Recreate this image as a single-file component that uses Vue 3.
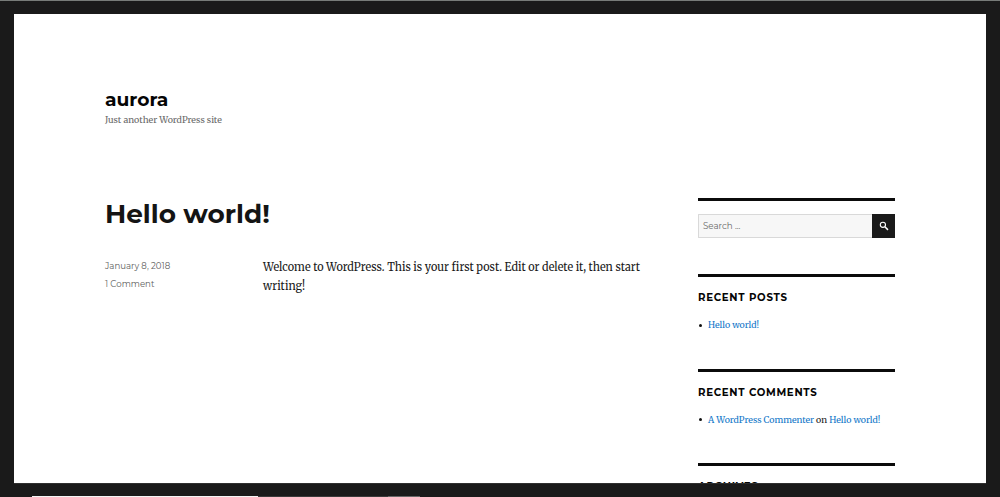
<script setup>
const recent = [
  { title: 'Recent Posts', key: 'posts' },
  { title: 'Recent Comments', key: 'comments' },
]
</script>

<template>
  <div class="window">
    <div class="page">
      <header class="masthead">
        <h1 class="site-title">aurora</h1>
        <p class="tagline narrow">Just another WordPress site</p>
      </header>
      <div class="content">
        <main class="post">
          <h2 class="post-title">Hello world!</h2>
          <div class="post-row">
            <footer class="meta">
              <div>January 8, 2018</div>
              <div>1 Comment</div>
            </footer>
            <div class="body">
              <div>Welcome to WordPress. This is your first post. Edit or delete it, then start</div>
              <div>writing!</div>
            </div>
          </div>
        </main>
        <aside class="sidebar">
          <section class="widget search-widget">
            <form class="search" @submit.prevent>
              <div class="field">Search ...</div>
              <button class="submit" aria-label="Search">
                <svg width="10" height="10" viewBox="0 0 10 10" fill="none" stroke="#fff">
                  <circle cx="3.9" cy="3.8" r="2.6" stroke-width="1.1" />
                  <path d="M5.9 5.8 9 8.9" stroke-width="1.5" />
                </svg>
              </button>
            </form>
          </section>
          <section v-for="w in recent" :key="w.key" class="widget" :class="w.key">
            <h3>{{ w.title }}</h3>
            <ul>
              <li v-if="w.key === 'posts'"><span class="narrow"><a>Hello world!</a></span></li>
              <li v-else><span class="narrow"><a>A WordPress Commenter</a> on <a>Hello world!</a></span></li>
            </ul>
          </section>
          <section class="widget archives">
            <h3>Archives</h3>
          </section>
        </aside>
      </div>
    </div>
    <div class="edge"><i class="light"></i><i class="gap"></i><i class="dim"></i></div>
  </div>
</template>

<style>
body { margin: 0; background: #1a1a1a; }
</style>

<style scoped>
* { box-sizing: border-box; }
.window {
  width: 1000px; height: 497px; overflow: hidden;
  display: flex; flex-direction: column;
  background: #1a1a1a; border-top: 1px solid #777b78;
}
.page {
  margin: 13px 14px 0 14px; height: 470px; flex: none; overflow: hidden;
  background: #fff; padding: 76px 91px 0;
  border-bottom: 1px solid #303030;
  font-family: Merriweather, "Noto Serif", "DejaVu Serif", serif; color: #1a1a1a;
}
h1, h2, h3, p, ul { margin: 0; padding: 0; }
.narrow { transform: scaleX(.96); transform-origin: 0 50%; }
.masthead { height: 108px; white-space: nowrap; }
.site-title { font: 700 18.7px/20px Montserrat, Inter, sans-serif; color: #050505; }
.tagline { font-size: 9.25px; line-height: 16px; color: #686868; margin-top: 2px; }
.content { display: flex; justify-content: space-between; }
.post { width: 550px; white-space: nowrap; }
.post-title { font: 700 26.3px/32px Montserrat, Inter, sans-serif; color: #141414; }
.post-row { display: flex; margin-top: 27px; }
.meta { flex: none; width: 158px; font: 400 8.6px/18.4px Montserrat, Inter, sans-serif; color: #606060; }
.body { font-size: 11.6px; line-height: 19px; color: #1a1a1a; transform: scaleX(.938); transform-origin: 0 0; padding-top: 1px; }
.sidebar { width: 197px; white-space: nowrap; }
.widget { border-top: 3px solid #0b0b0b; height: 95px; }
.search-widget { height: 76px; padding-top: 13px; }
.posts { height: 94.5px; }
.comments { height: 94.5px; }
.search { display: flex; height: 24px; }
.field {
  flex: 1; border: 1px solid #d9d9d9; border-right: 0; border-radius: 1px 0 0 1px;
  background: #f7f7f7; padding-left: 4px;
  font: 400 8.7px/22px Montserrat, Inter, sans-serif; color: #686868;
}
.submit {
  width: 23px; border: 0; padding: 0; background: #1a1a1a;
  display: flex; align-items: center; justify-content: center;
}
h3 { font: 700 10.2px/13px Montserrat, Inter, sans-serif; text-transform: uppercase; padding-top: 14px; letter-spacing: .71px; color: #050505; }
ul { list-style: none; margin-top: 14px; font-size: 9.2px; line-height: 15px; }
li { display: flex; align-items: center; }
li::before { content: ""; width: 3px; height: 3px; border-radius: 50%; background: #111; margin: 0 6.4px 1px 1px; }
a { color: #1076c8; }
.edge { margin-top: auto; height: 1px; display: flex; }
.edge i { height: 1px; }
.light { width: 226px; margin-left: 32px; background: #f4f4f4; }
.gap { width: 130px; background: #3a3a3a; }
.dim { width: 32px; background: #666; }
</style>
